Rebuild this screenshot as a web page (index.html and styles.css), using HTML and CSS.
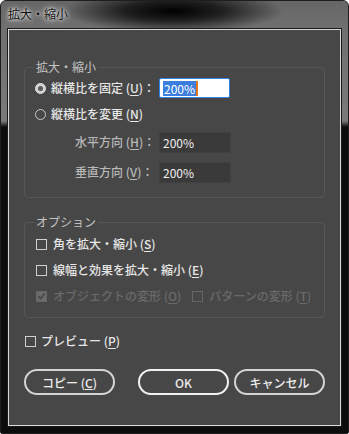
FILE: index.html
```html
<!DOCTYPE html>
<html lang="ja">
<head>
  <meta charset="UTF-8">
  <title>拡大・縮小</title>
  <link rel="stylesheet" href="styles.css">
</head>
<body>
  <div class="window">
    <div class="titlebar">拡大・縮小</div>
    <div class="panel">
      <fieldset class="group group-scale">
        <legend>拡大・縮小</legend>
        <div class="row">
          <span class="radio on"></span>
          <span class="label fixed">縦横比を固定 (<u>U</u>)：</span>
          <span class="field active"><span class="sel">200%</span><span class="caret"></span></span>
        </div>
        <div class="row">
          <span class="radio"></span>
          <span class="label">縦横比を変更 (<u>N</u>)</span>
        </div>
        <div class="row sub">
          <span class="label dim">水平方向 (<u>H</u>)：</span>
          <span class="field">200%</span>
        </div>
        <div class="row sub">
          <span class="label dim">垂直方向 (<u>V</u>)：</span>
          <span class="field">200%</span>
        </div>
      </fieldset>

      <fieldset class="group group-opt">
        <legend>オプション</legend>
        <div class="row">
          <span class="check"></span>
          <span class="label">角を拡大・縮小 (<u>S</u>)</span>
        </div>
        <div class="row">
          <span class="check"></span>
          <span class="label">線幅と効果を拡大・縮小 (<u>E</u>)</span>
        </div>
        <div class="row disabled">
          <span class="check checked">
            <svg width="10" height="10" viewBox="0 0 10 10"><path d="M1.5 5.2 L4 7.8 L8.6 2" fill="none" stroke="#4a4a4a" stroke-width="2"/></svg>
          </span>
          <span class="label">オブジェクトの変形 (<u>O</u>)</span>
          <span class="check gap"></span>
          <span class="label">パターンの変形 (<u>T</u>)</span>
        </div>
      </fieldset>

      <div class="row preview">
        <span class="check"></span>
        <span class="label">プレビュー (<u>P</u>)</span>
      </div>

      <div class="buttons">
        <button class="btn">コピー (<u>C</u>)</button>
        <button class="btn primary">OK</button>
        <button class="btn">キャンセル</button>
      </div>
    </div>
  </div>
</body>
</html>
```

FILE: styles.css
```css
body {
  margin: 0;
  background: #fff;
  font-family: "Noto Sans CJK JP", "Noto Sans", sans-serif;
  font-size: 12px;
}
.window {
  width: 349px;
  height: 434px;
  box-sizing: border-box;
  border: 1px solid #1e1e1e;
  border-radius: 6px 6px 2px 2px;
  background:
    linear-gradient(to bottom, #6c6c6c 0, #7a7a7a 120px, #0c0c0c 126px, #0c0c0c 100%);
  display: flex;
  flex-direction: column;
  padding: 0 6px 7px 6px;
}
.titlebar {
  height: 28px;
  line-height: 26px;
  margin: 0 -6px;
  padding-left: 7px;
  color: #111;
  font-size: 12px;
  text-shadow: 0 0 6px #fff, 0 0 3px #fff;
  background:
    radial-gradient(ellipse 110px 22px at 172px 10px, rgba(0,0,0,1) 0, rgba(0,0,0,0.7) 45%, rgba(0,0,0,0) 100%),
    linear-gradient(to bottom, #666, #707070);
  border-radius: 5px 5px 0 0;
}
.panel {
  flex: 1;
  background: #474747;
  border: 1px solid #d8d8d8;
  outline: 1px solid #1a1a1a;
  margin: 0 1px;
  padding: 30px 15px 0 15px;
  display: flex;
  flex-direction: column;
  color: #e6e6e6;
  font-weight: 500;
}
.group {
  margin: 0;
  padding: 6px 10px 8px 10px;
  border: 1px solid #565656;
  border-radius: 4px;
}
.group legend {
  padding: 0 2px;
  margin-left: -1px;
  color: #c4c4c4;
  font-size: 12px;
  font-weight: normal;
  line-height: 14px;
}
.group-scale {
  height: 138px;
  box-sizing: border-box;
  padding-top: 1px;
}
.group-opt {
  margin-top: 17px;
  height: 103px;
  box-sizing: border-box;
  padding-top: 2px;
}
.row {
  display: flex;
  align-items: center;
  height: 26px;
}
.group-scale .row.sub {
  height: 30px;
  padding-left: 40px;
}
.group-scale .row.sub:first-of-type {
  margin-top: 2px;
}
.label {
  white-space: nowrap;
  line-height: 16px;
}
.label.fixed {
  width: 108px;
}
.label u {
  text-underline-offset: 2px;
}
.label.dim {
  color: #b8b8b8;
  width: 84px;
  text-align: left;
}
.radio {
  width: 11px;
  height: 11px;
  border: 1px solid #c8c8c8;
  border-radius: 50%;
  margin: 0 5px 0 0;
  box-sizing: border-box;
  display: inline-flex;
  align-items: center;
  justify-content: center;
}
.radio.on {
  background: #d0d0d0;
  border-color: #e0e0e0;
}
.radio.on::after {
  content: "";
  width: 5px;
  height: 5px;
  border-radius: 50%;
  background: #5a5a5a;
}
.check {
  width: 11px;
  height: 11px;
  border: 1px solid #cfcfcf;
  box-sizing: border-box;
  margin: 0 6px 0 1px;
  display: inline-flex;
  align-items: center;
  justify-content: center;
}
.check.checked {
  background: #6c6c6c;
  border-color: #6c6c6c;
}
.check.gap {
  margin-left: 11px;
}
.disabled {
  color: #6a6a6a;
}
.disabled .check {
  border-color: #666;
}
.field {
  width: 72px;
  height: 21px;
  box-sizing: border-box;
  background: #3a3a3a;
  border: 1px solid #404040;
  border-radius: 2px;
  color: #eee;
  font-weight: normal;
  padding: 0 3px;
  line-height: 19px;
  display: inline-flex;
  align-items: center;
}
.field.active {
  background: #fff;
  border: 1px solid #2f82e8;
  width: 71px;
  height: 20px;
}
.sel {
  background: #3c7ee0;
  color: #fff;
  line-height: 15px;
  padding: 0 1px;
}
.caret {
  width: 2px;
  height: 15px;
  background: #e0791c;
}
.preview {
  margin-top: 13px;
  height: 20px;
}
.preview .check {
  margin-left: 1px;
  margin-right: 5px;
}
.buttons {
  display: flex;
  margin-top: 18px;
  gap: 5px;
}
.btn {
  height: 26px;
  width: 92px;
  border: 2px solid #d4d4d4;
  border-radius: 13px;
  background: transparent;
  color: #ececec;
  font-family: inherit;
  font-size: 12px;
  font-weight: 500;
  padding: 0;
  cursor: pointer;
}
.btn.primary {
  margin-left: 18px;
  border-color: #f2f2f2;
}
```
